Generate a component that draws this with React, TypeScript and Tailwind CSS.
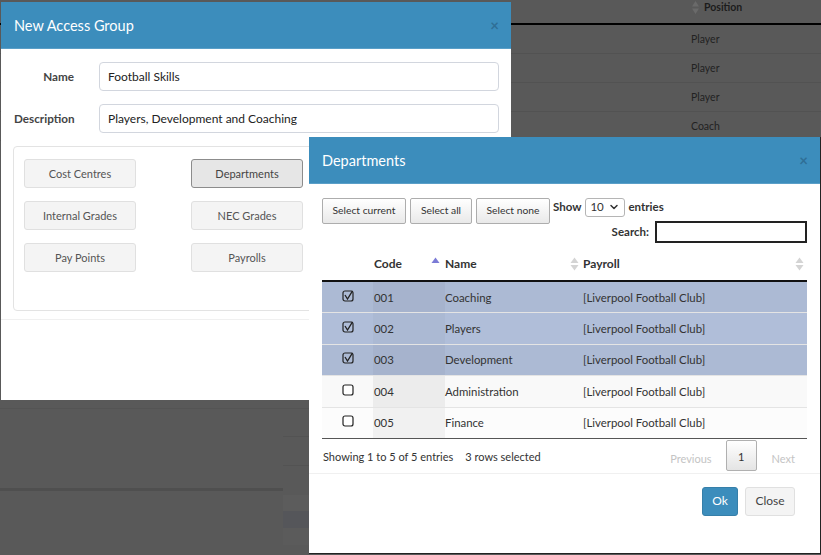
import { ChevronDown } from "lucide-react"

const sideOptions = [
  ["Cost Centres", "Departments"],
  ["Internal Grades", "NEC Grades"],
  ["Pay Points", "Payrolls"],
]

const departments = [
  { code: "001", name: "Coaching", selected: true },
  { code: "002", name: "Players", selected: true },
  { code: "003", name: "Development", selected: true },
  { code: "004", name: "Administration", selected: false },
  { code: "005", name: "Finance", selected: false },
]

function SortArrows({ active }: { active?: boolean }) {
  return (
    <svg width="9" height="14" viewBox="0 0 9 14" className="shrink-0">
      <path d="M4.5 0.5 L8.5 6 H0.5 Z" fill={active ? "#7b7bd6" : "#d4d4d4"} />
      {!active && <path d="M4.5 13.5 L8.5 8 H0.5 Z" fill="#d4d4d4" />}
    </svg>
  )
}

function Check({ on }: { on: boolean }) {
  return (
    <svg width="12" height="12" viewBox="0 0 12 12">
      <rect x="1" y="1" width="10" height="10" rx="2" fill={on ? "none" : "#fff"} stroke="#222" strokeWidth="1.2" />
      {on && <path d="M3 5 L5.5 9 L10.5 0.8" fill="none" stroke="#222" strokeWidth="1.3" />}
    </svg>
  )
}

function ModalHeader({ title }: { title: string }) {
  return (
    <div className="flex h-[47px] items-center justify-between border-b border-[#5a9fc8] bg-[#3c8dbc] pl-[13px] pr-[12px] pt-[2px] text-white">
      <h2 className="text-[14.5px] leading-none">{title}</h2>
      <span className="-mt-[2px] text-[15px] font-bold leading-none text-[#2f6f96]">×</span>
    </div>
  )
}

export default function App() {
  return (
    <div className="relative h-[555px] w-[821px] overflow-hidden bg-[#595959] text-[12px] text-[#333] [font-family:Lato,sans-serif]">
      {/* Dimmed page behind the dialogs */}
      <div className="flex h-[25px] items-start gap-[5px] border-b-2 border-[#000] pl-[692px] text-[10.5px] font-bold text-[#1c1c1c]">
        <svg width="7" height="13" viewBox="0 0 7 13" className="mt-px">
          <path d="M3.5 0 L7 5.5 H0 Z M3.5 13 L7 7.5 H0 Z" fill="#6a6a6a" />
        </svg>
        Position
      </div>
      {["Player", "Player", "Player", "Coach"].map((p, i) => (
        <div key={i} className="flex h-[29px] items-center border-b border-[#525252] pl-[691px] pt-[2px] text-[10.5px] text-[#222]">
          {p}
        </div>
      ))}
      <div className="mt-[267px] h-px w-[309px] bg-[#545454]" />
      <div className="flex w-[309px]">
        <div className="w-[283px] pt-[79px]">
          <div className="h-[3px] bg-[#4f4f4f]" />
        </div>
        <div className="flex-1 pt-[27px]">
          <div className="h-[29px] border-t border-[#535353]" />
          <div className="h-[30px] border-t border-[#535353]" />
          <div className="h-[16px] bg-[#5c5c5c]" />
          <div className="h-[17px] bg-[#55565a]" />
          <div className="h-[17px] bg-[#5b5b5b]" />
        </div>
      </div>

      {/* New Access Group dialog */}
      <div className="absolute left-px top-[2px] h-[398px] w-[510px] bg-white">
        <ModalHeader title="New Access Group" />
        <div className="flex flex-col gap-[13px] pl-[13px] pr-[12px] pt-[13px]">
          <div className="flex items-center">
            <label className="w-[60px] text-right text-[11.7px] font-bold text-[#444]">Name</label>
            <input readOnly value="Football Skills" className="ml-[25px] h-[29px] w-[400px] rounded-[4px] border border-[#d2d6de] px-[8px] text-[#222] outline-none" />
          </div>
          <div className="flex items-center">
            <label className="w-[60px] text-right text-[11.7px] font-bold text-[#444]">Description</label>
            <input readOnly value="Players, Development and Coaching" className="ml-[25px] h-[29px] w-[400px] rounded-[4px] border border-[#d2d6de] px-[8px] text-[#222] outline-none" />
          </div>
        </div>
        <div className="ml-[12px] mr-[13px] mt-[13px] flex h-[165px] flex-col gap-[13px] rounded-[4px] border border-[#e3e3e3] px-[10px] pt-[12px]">
          {sideOptions.map((row) => (
            <div key={row[0]} className="flex gap-[55px]">
              {row.map((o) => (
                <button
                  key={o}
                  className={
                    o === "Departments"
                      ? "h-[29px] w-[112px] rounded-[3px] border border-[#8c8c8c] bg-[#e6e6e6] pt-[2px] text-[11px] text-[#444]"
                      : "h-[29px] w-[112px] rounded-[3px] border border-[#e0e0e0] bg-[#f4f4f4] pt-[2px] text-[11px] text-[#555]"
                  }
                >
                  {o}
                </button>
              ))}
            </div>
          ))}
        </div>
        <div className="mt-[8px] h-px bg-[#f0f0f0]" />
      </div>

      {/* Departments dialog */}
      <div className="absolute left-[309px] top-[137px] h-[417px] w-[512px] border-r border-b border-[#222] bg-white">
        <ModalHeader title="Departments" />
        <div className="flex pl-[13px] pr-[13px] pt-[14px]">
          <div className="flex gap-[4px]">
            {[
              ["Select current", "w-[84px]"],
              ["Select all", "w-[62px]"],
              ["Select none", "w-[74px]"],
            ].map(([t, w]) => (
              <button key={t} className={`h-[26px] ${w} rounded-[2px] border border-[#adadad] bg-[linear-gradient(#fff,#e9e9e9)] text-[10.3px] text-[#333]`}>
                {t}
              </button>
            ))}
          </div>
          <div className="ml-[3px] flex-1">
            <div className="-mt-px flex h-[20px] items-center gap-[3px] text-[11.5px] font-bold">
              Show
              <div className="ml-px flex h-[19px] w-[40px] items-center justify-between rounded-[3px] border border-[#b5b5b5] px-[4px] font-normal">
                10
                <ChevronDown size={12} strokeWidth={3} />
              </div>
              entries
            </div>
            <div className="mt-[4px] flex items-center justify-end gap-[6px] text-[11.5px] font-bold">
              Search:
              <div className="h-[22px] w-[152px] border-2 border-[#222] bg-white" />
            </div>
          </div>
        </div>
        <div className="mx-[13px] mt-[2px]">
          <div className="flex h-[37px] items-center border-b-2 border-[#111] pt-[2px] font-bold text-[#333]">
            <div className="w-[51px]" />
            <div className="w-[58px] pl-px">Code</div>
            <div className="flex w-[14px] justify-start"><SortArrows active /></div>
            <div className="w-[125px]">Name</div>
            <div className="w-[13px]"><SortArrows /></div>
            <div className="flex-1">Payroll</div>
            <div className="mr-[3px]"><SortArrows /></div>
          </div>
          {departments.map((d, i) => (
            <div
              key={d.code}
              className={`flex h-[31.4px] items-center border-b text-[11.4px] ${i === 4 ? "border-[#555]" : "border-[#e4e4e4]"} ${
                d.selected ? (i === 1 ? "bg-[#b0bed9]" : "bg-[#acbad4]") : i === 3 ? "bg-[#f9f9f9]" : "bg-[#fcfcfc]"
              }`}
            >
              <div className="flex w-[51px] justify-center pb-[3px]"><Check on={d.selected} /></div>
              <div className={`flex h-full w-[72px] items-center pl-px ${d.selected ? (i === 1 ? "bg-[#abb9d3]" : "bg-[#a6b3cd]") : i === 3 ? "bg-[#ececec]" : "bg-[#f1f1f1]"}`}>
                {d.code}
              </div>
              <div className="w-[138px]">{d.name}</div>
              <div>[Liverpool Football Club]</div>
            </div>
          ))}
          <div className="flex h-[34px] items-center justify-between text-[11px]">
            <div className="flex gap-[12px] pl-px pt-[3px]">
              <span>Showing 1 to 5 of 5 entries</span>
              <span>3 rows selected</span>
            </div>
            <div className="flex items-center pr-[12px] text-[#c4c4c4]">
              <span className="mr-[14px] pt-[6px]">Previous</span>
              <span className="flex h-[31px] w-[31px] items-center justify-center rounded-[2px] border border-[#b0b0b0] bg-[linear-gradient(#fff,#e4e4e4)] pt-[2px] text-[#333]">1</span>
              <span className="ml-[15px] pt-[6px]">Next</span>
            </div>
          </div>
        </div>
        <div className="h-px bg-[#f0f0f0]" />
        <div className="flex justify-end gap-[7px] pr-[25px] pt-[13px]">
          <button className="h-[29px] w-[36px] rounded-[3px] border border-[#367fa9] bg-[#3c8dbc] text-white">Ok</button>
          <button className="h-[29px] w-[50px] rounded-[3px] border border-[#e0e0e0] bg-[#f4f4f4] text-[#444]">Close</button>
        </div>
      </div>
    </div>
  )
}
